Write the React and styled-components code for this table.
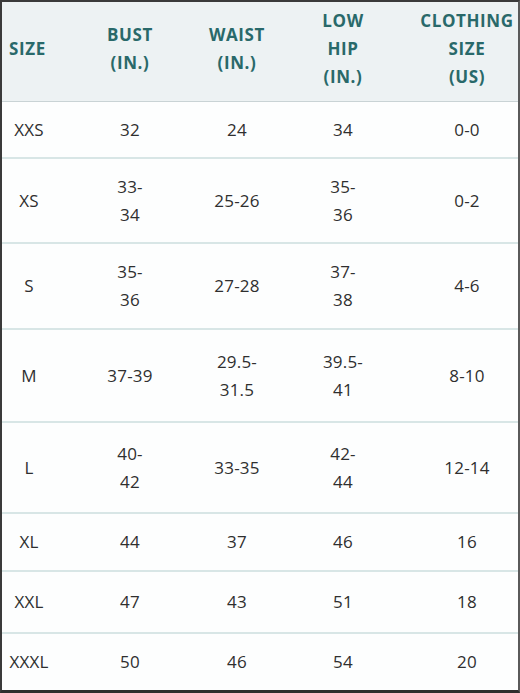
import React from 'react';
import styled, { createGlobalStyle } from 'styled-components';

const GlobalStyle = createGlobalStyle`
  html, body {
    margin: 0;
    padding: 0;
    background: #ffffff;
  }
  * {
    box-sizing: border-box;
  }
`;

const Frame = styled.div`
  width: 520px;
  height: 693px;
  overflow: hidden;
  border-top: 2px solid #3a3a3a;
  border-left: 2px solid #3a3a3a;
  border-right: 2px solid #5a5a5a;
  border-bottom: 3px solid #2e2e2e;
  background: #fdfefe;
  font-family: 'Open Sans', 'Liberation Sans', sans-serif;
`;

const COLS = '54px 148px 66px 146px 1fr';

const HeadRow = styled.div`
  display: grid;
  grid-template-columns: ${COLS};
  height: 100px;
  padding-bottom: 6px;
  background: #edf2f3;
  border-bottom: 1px solid #c9d3d5;
`;

const HeadCell = styled.div`
  display: flex;
  align-items: center;
  justify-content: ${(p) => (p.$left ? 'flex-start' : 'center')};
  padding-left: ${(p) => (p.$left ? '7px' : '0')};
  padding-right: ${(p) => (p.$shift ? '0' : '0')};
  text-align: center;
  white-space: nowrap;
  color: #29696a;
  font-weight: 700;
  font-size: 17px;
  line-height: 28px;
  letter-spacing: 0.6px;
`;

const Row = styled.div`
  display: grid;
  grid-template-columns: ${COLS};
  height: ${(p) => p.$h}px;
  border-bottom: ${(p) => (p.$last ? 'none' : '2px solid #d8e6e6')};
`;

const Cell = styled.div`
  display: flex;
  align-items: center;
  justify-content: center;
  text-align: center;
  white-space: nowrap;
  color: #2f2f2f;
  font-size: 17px;
  line-height: 28px;
  letter-spacing: 0.2px;
`;

const headers = [
  ['SIZE'],
  ['BUST', '(IN.)'],
  ['WAIST', '(IN.)'],
  ['LOW', 'HIP', '(IN.)'],
  ['CLOTHING', 'SIZE', '(US)'],
];

const rows = [
  { h: 57, cells: ['XXS', '32', '24', '34', '0-0'] },
  { h: 85, cells: ['XS', '33-|34', '25-26', '35-|36', '0-2'] },
  { h: 86, cells: ['S', '35-|36', '27-28', '37-|38', '4-6'] },
  { h: 93, cells: ['M', '37-39', '29.5-|31.5', '39.5-|41', '8-10'] },
  { h: 91, cells: ['L', '40-|42', '33-35', '42-|44', '12-14'] },
  { h: 58, cells: ['XL', '44', '37', '46', '16'] },
  { h: 62, cells: ['XXL', '47', '43', '51', '18'] },
  { h: 56, cells: ['XXXL', '50', '46', '54', '20'], last: true },
];

function Lines({ text }) {
  const parts = text.split('|');
  return (
    <div>
      {parts.map((t, i) => (
        <div key={i}>{t}</div>
      ))}
    </div>
  );
}

export default function App() {
  return (
    <>
      <GlobalStyle />
      <Frame>
        <HeadRow>
          {headers.map((lines, i) => (
            <HeadCell key={i} $left={i === 0}>
              <div>
                {lines.map((l) => (
                  <div key={l}>{l}</div>
                ))}
              </div>
            </HeadCell>
          ))}
        </HeadRow>
        {rows.map((r) => (
          <Row key={r.cells[0]} $h={r.h} $last={r.last}>
            {r.cells.map((c, i) => (
              <Cell key={i}>
                <Lines text={c} />
              </Cell>
            ))}
          </Row>
        ))}
      </Frame>
    </>
  );
}
